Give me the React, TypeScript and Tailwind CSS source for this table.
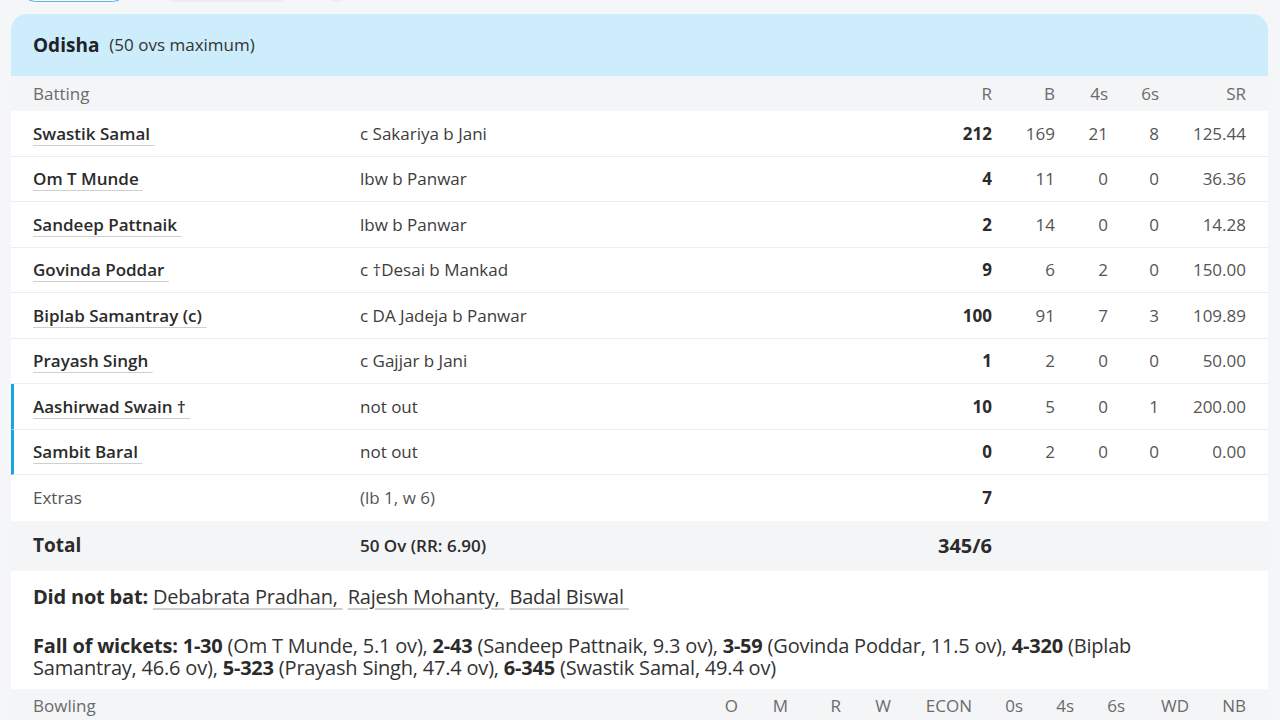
const batters = [
  { name: 'Swastik Samal', how: 'c Sakariya b Jani', r: '212', b: '169', f: '21', s: '8', sr: '125.44' },
  { name: 'Om T Munde', how: 'lbw b Panwar', r: '4', b: '11', f: '0', s: '0', sr: '36.36' },
  { name: 'Sandeep Pattnaik', how: 'lbw b Panwar', r: '2', b: '14', f: '0', s: '0', sr: '14.28' },
  { name: 'Govinda Poddar', how: 'c \u2020Desai b Mankad', r: '9', b: '6', f: '2', s: '0', sr: '150.00' },
  { name: 'Biplab Samantray (c)', how: 'c DA Jadeja b Panwar', r: '100', b: '91', f: '7', s: '3', sr: '109.89' },
  { name: 'Prayash Singh', how: 'c Gajjar b Jani', r: '1', b: '2', f: '0', s: '0', sr: '50.00' },
  { name: 'Aashirwad Swain \u2020', how: 'not out', r: '10', b: '5', f: '0', s: '1', sr: '200.00', notOut: true },
  { name: 'Sambit Baral', how: 'not out', r: '0', b: '2', f: '0', s: '0', sr: '0.00', notOut: true },
]

const fow = [
  { w: '1-30', who: 'Om T Munde, 5.1 ov' },
  { w: '2-43', who: 'Sandeep Pattnaik, 9.3 ov' },
  { w: '3-59', who: 'Govinda Poddar, 11.5 ov' },
  { w: '4-320', who: 'Biplab Samantray, 46.6 ov' },
  { w: '5-323', who: 'Prayash Singh, 47.4 ov' },
  { w: '6-345', who: 'Swastik Samal, 49.4 ov' },
]

function Name({ children }: { children: string }) {
  return (
    <span className="font-semibold text-[#2b2b2b] underline decoration-[#cfcfcf] decoration-1 underline-offset-[5px]">
      {children}{'\u00a0'}
    </span>
  )
}

export default function App() {
  return (
    <div
      className="min-h-[720px] bg-[#f5f6f8] overflow-hidden"
      style={{ fontFamily: '"Open Sans", "Noto Sans", sans-serif' }}
    >
      {/* tabs, mostly scrolled out of view */}
      <div className="flex items-end -mt-[29px] h-[31px] pl-[20px]">
        <div className="h-[31px] w-[108px] rounded-full border border-[#5fb2e4] bg-white" />
        <div className="h-[31px] w-[132px] rounded-full bg-[#ebedf0] ml-[32px]" />
        <div className="h-[31px] w-[30px] rounded-full bg-[#ebedf0] ml-[30px]" />
      </div>

      <div className="mt-[12px] ml-[11px] mr-[12px] rounded-t-[16px] bg-white overflow-hidden">
        <div className="h-[62px] bg-[#cdedfc] px-[22px] flex items-center gap-[10px]">
          <span className="text-[19px] font-bold text-[#1f2328]">Odisha</span>
          <span className="text-[17px] text-[#333]">(50 ovs maximum)</span>
        </div>

        <div className="h-[35px] bg-[#f4f5f7] px-[22px] flex items-center text-[17px] text-[#6b6b6b]">
          <div className="w-[327px]">Batting</div>
          <div className="flex-1" />
          <div className="w-[60px] text-right">R</div>
          <div className="w-[63px] text-right">B</div>
          <div className="w-[53px] text-right">4s</div>
          <div className="w-[51px] text-right">6s</div>
          <div className="w-[87px] text-right">SR</div>
        </div>

        {batters.map((p, i) => (
          <div
            key={i}
            className={
              'h-[45.5px] border-b border-[#ececec] px-[22px] flex items-center text-[17px] text-[#555] ' +
              (p.notOut ? 'border-l-[3px] border-l-[#1ca3e3] pl-[19px]' : '')
            }
          >
            <div className="w-[327px]"><Name>{p.name}</Name></div>
            <div className="flex-1 text-[#3c3c3c]">{p.how}</div>
            <div className="w-[60px] text-right font-bold text-[#2b2b2b]">{p.r}</div>
            <div className="w-[63px] text-right">{p.b}</div>
            <div className="w-[53px] text-right">{p.f}</div>
            <div className="w-[51px] text-right">{p.s}</div>
            <div className="w-[87px] text-right">{p.sr}</div>
          </div>
        ))}

        <div className="h-[45.5px] px-[22px] flex items-center text-[17px] text-[#555]">
          <div className="w-[327px]">Extras</div>
          <div className="flex-1">(lb 1, w 6)</div>
          <div className="w-[60px] text-right font-bold text-[#2b2b2b]">7</div>
          <div className="w-[254px]" />
        </div>

        <div className="h-[50px] bg-[#f4f5f7] px-[22px] flex items-center text-[#2b2b2b]">
          <div className="w-[327px] text-[19px] font-bold">Total</div>
          <div className="flex-1 text-[17px] font-semibold">50 Ov (RR: 6.90)</div>
          <div className="w-[100px] text-right text-[20px] font-bold">345/6</div>
          <div className="w-[254px]" />
        </div>

        <div className="px-[22px] pt-[15px] text-[20px] leading-[22px] text-[#333] tracking-[-0.2px]">
          <p>
            <span className="font-bold text-[#2b2b2b]">Did not bat: </span>
            <span className="underline decoration-[#cfcfcf] underline-offset-[4px]">Debabrata Pradhan,{'\u00a0'}</span>{' '}
            <span className="underline decoration-[#cfcfcf] underline-offset-[4px]">Rajesh Mohanty,{'\u00a0'}</span>{' '}
            <span className="underline decoration-[#cfcfcf] underline-offset-[4px]">Badal Biswal{'\u00a0'}</span>
          </p>
          <p className="mt-[27px] pb-[10px] max-w-[1150px]">
            <span className="font-bold text-[#2b2b2b]">Fall of wickets: </span>
            {fow.map((f, i) => (
              <span key={i}>
                <span className="font-bold text-[#2b2b2b]">{f.w}</span> ({f.who}){i < fow.length - 1 ? ', ' : ''}
              </span>
            ))}
          </p>
        </div>

        <div className="h-[34px] bg-[#f4f5f7] px-[22px] flex items-center text-[17px] text-[#6b6b6b]">
          <div className="flex-1">Bowling</div>
          <div className="w-[50px] text-right">O</div>
          <div className="w-[50px] text-right">M</div>
          <div className="w-[53px] text-right">R</div>
          <div className="w-[50px] text-right">W</div>
          <div className="w-[81px] text-right">ECON</div>
          <div className="w-[51px] text-right">0s</div>
          <div className="w-[51px] text-right">4s</div>
          <div className="w-[51px] text-right">6s</div>
          <div className="w-[64px] text-right">WD</div>
          <div className="w-[57px] text-right">NB</div>
        </div>
      </div>
    </div>
  )
}
